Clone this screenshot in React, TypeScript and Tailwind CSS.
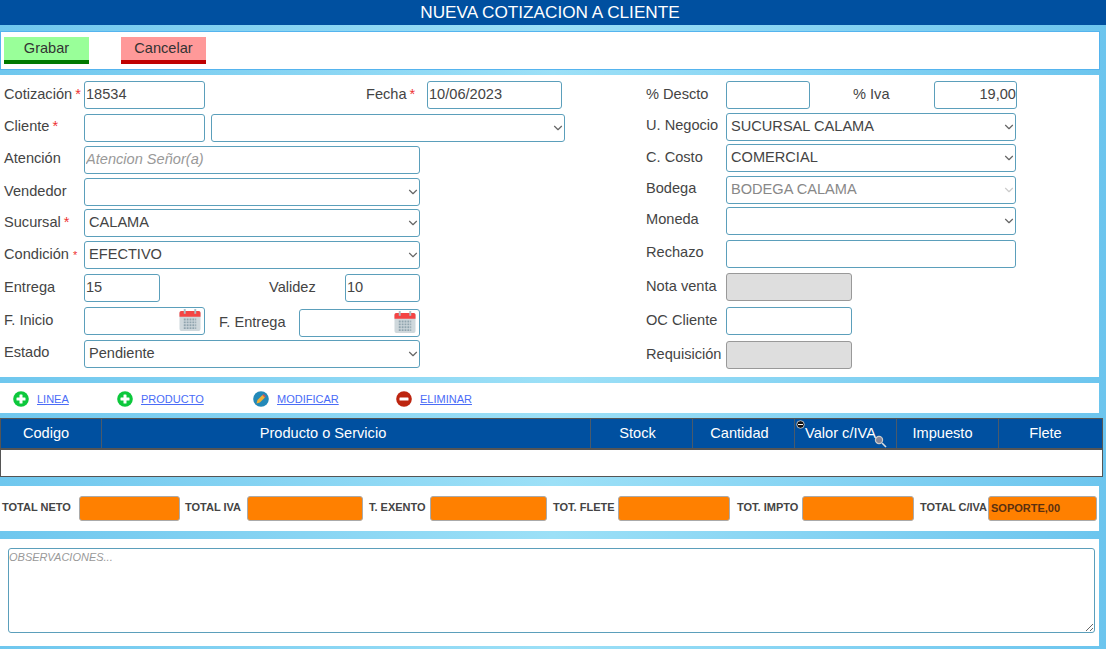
import { ChevronDown } from "lucide-react";

const inputCls =
  "h-full rounded-[3px] border border-[#5b9fbb] bg-white px-px pb-[2px] text-[14.6px] text-[#444] outline-none";
const selectCls =
  "h-full w-full appearance-none rounded-[3px] border border-[#5b9fbb] bg-white pl-[4px] text-[14.6px] text-[#444] outline-none";
const grayCls = "h-full rounded-[3px] border border-[#999] bg-[#dedede]";
const orangeCls =
  "h-[25px] w-full rounded-[3px] border border-[#aaa] bg-[#ff8000] px-[2px] pb-[2px] text-[11px] font-bold text-[#5a3010] outline-none";

function Star({ className = "" }: { className?: string }) {
  return <span className={`text-[#e33] ${className}`}>*</span>;
}

function Label({ text, star, up }: { text: string; star?: boolean; up?: boolean }) {
  return (
    <span className={`w-[80px] shrink-0 whitespace-nowrap text-[14.6px] text-[#444] ${up ? "-translate-y-[1px]" : ""}`}>
      {text}
      {star && <Star className="ml-[3px]" />}
    </span>
  );
}

function Calendar() {
  return (
    <svg className="absolute right-[4px] top-[2px]" width="22" height="22" viewBox="0 0 23 23">
      <rect x="0.5" y="2" width="22" height="21" rx="2" fill="#cfd8dc" />
      <path d="M0.5 8V4a2 2 0 0 1 2-2h18a2 2 0 0 1 2 2v4z" fill="#f44444" />
      <rect x="5" y="0" width="2" height="5" fill="#b0bec5" />
      <rect x="16" y="0" width="2" height="5" fill="#b0bec5" />
      <path
        d="M5 11h13M5 14h13M5 17h13M5 20h13"
        stroke="#90a4ae"
        strokeWidth="2"
        strokeDasharray="2 1"
      />
    </svg>
  );
}

function Select({ value, width, disabled }: { value: string; width: string; disabled?: boolean }) {
  return (
    <div className={`relative h-full ${width}`}>
      <select
        disabled={disabled}
        defaultValue={value}
        className={`${selectCls} ${disabled ? "bg-[#e6e6e6] text-[#888]" : ""}`}
      >
        <option value={value}>{value}</option>
      </select>
      <ChevronDown
        size={14}
        strokeWidth={2}
        className={`pointer-events-none absolute right-0 top-[7px] ${
          disabled ? "text-[#ccc]" : "text-[#666]"
        }`}
      />
    </div>
  );
}

function CircleIcon({ color, minus }: { color: string; minus?: boolean }) {
  return (
    <svg width="16" height="16" viewBox="0 0 16 16" className="shrink-0">
      <circle cx="8" cy="8" r="7.8" fill={color} />
      <rect x="3.5" y="6.5" width="9" height="3" rx="0.6" fill="#fff" />
      {!minus && <rect x="6.5" y="3.5" width="3" height="9" rx="0.6" fill="#fff" />}
    </svg>
  );
}

function PencilIcon() {
  return (
    <svg width="16" height="16" viewBox="0 0 16 16" className="shrink-0">
      <circle cx="8" cy="8" r="7.8" fill="#2389b8" />
      <path d="M3.5 12.5l1-3.4 5-5 2.4 2.4-5 5z" fill="#f2b134" />
      <path d="M9.5 4.1l1-1 2.4 2.4-1 1z" fill="#d9534f" />
    </svg>
  );
}

function ActionLink({ icon, text }: { icon: React.ReactNode; text: string }) {
  return (
    <div className="flex items-center gap-[8px]">
      {icon}
      <a href="#" className="text-[11px] text-[#4a6cf7] underline">
        {text}
      </a>
    </div>
  );
}

const columns = [
  { name: "Codigo", pad: "pr-[10px]" },
  { name: "Producto o Servicio", pad: "pr-[46px]" },
  { name: "Stock", pad: "pr-[8px]" },
  { name: "Cantidad", pad: "pr-[8px]" },
  { name: "Valor c/IVA", pad: "pr-[10px]" },
  { name: "Impuesto", pad: "pr-[10px]" },
  { name: "Flete", pad: "pr-[10px]" },
];

const totals = [
  { label: "TOTAL NETO", value: "", pad: "" },
  { label: "TOTAL IVA", value: "", pad: "pl-[5px]" },
  { label: "T. EXENTO", value: "", pad: "pl-[6px]" },
  { label: "TOT. FLETE", value: "", pad: "pl-[6px]" },
  { label: "TOT. IMPTO", value: "", pad: "pl-[7px]" },
  { label: "TOTAL C/IVA", value: "SOPORTE,00", pad: "pl-[6px]" },
];

export default function App() {
  return (
    <div
      className="h-[649px] w-[1106px] overflow-hidden bg-gradient-to-r from-[#6fc7ee] via-[#9ce0f7] to-[#6cc5ee] text-[#444]"
      style={{ fontFamily: '"Liberation Sans", Arial, sans-serif' }}
    >
      <div className="flex h-[25px] items-center justify-center bg-[#0050a0] pr-[6px] text-[17.2px] text-white">
        NUEVA COTIZACION A CLIENTE
      </div>

      <div className="mt-[6px] flex h-[39px] w-[1100px] items-start gap-[32px] border border-[#55b4ee] bg-white pl-[3px] pt-[5px]">
        <button className="h-[27px] w-[85px] border-b-[4px] border-[#007a00] bg-[#99ff99] text-[14.6px] text-[#333]">
          Grabar
        </button>
        <button className="h-[27px] w-[85px] border-b-[4px] border-[#c00000] bg-[#ff9999] text-[14.6px] text-[#333]">
          Cancelar
        </button>
      </div>

      <div className="mt-[5px] flex h-[302px] w-[1099px] bg-white pt-[6px]">
        <div className="w-[646px] shrink-0 pl-[4px]">
          <div className="flex h-[28px] items-center">
            <Label text="Cotización" star />
            <input className={`${inputCls} w-[121px]`} defaultValue="18534" />
            <span className="ml-[161px] w-[61px] text-[14.6px]">
              Fecha
              <Star className="ml-[3px]" />
            </span>
            <input className={`${inputCls} w-[135px]`} defaultValue="10/06/2023" />
          </div>
          <div className="mt-[5px] flex h-[28px] items-center">
            <Label text="Cliente" star up />
            <input className={`${inputCls} w-[121px]`} />
            <div className="ml-[6px] h-full">
              <Select value="" width="w-[354px]" />
            </div>
          </div>
          <div className="mt-[4px] flex h-[28px] items-center">
            <Label text="Atención" up />
            <input
              className={`${inputCls} w-[336px] placeholder:italic placeholder:text-[#999]`}
              placeholder="Atencion Señor(a)"
            />
          </div>
          <div className="mt-[4px] flex h-[28px] items-center">
            <Label text="Vendedor" />
            <Select value="" width="w-[336px]" />
          </div>
          <div className="mt-[3px] flex h-[28px] items-center">
            <Label text="Sucursal" star />
            <Select value="CALAMA" width="w-[336px]" />
          </div>
          <div className="mt-[4px] flex h-[28px] items-center">
            <span className="w-[80px] shrink-0 whitespace-nowrap text-[14.6px]">
              Condición
              <Star className="ml-[4px] text-[11px]" />
            </span>
            <Select value="EFECTIVO" width="w-[336px]" />
          </div>
          <div className="mt-[5px] flex h-[28px] items-center">
            <Label text="Entrega" />
            <input className={`${inputCls} w-[76px]`} defaultValue="15" />
            <span className="ml-[109px] w-[76px] text-[14.6px]">Validez</span>
            <input className={`${inputCls} w-[75px]`} defaultValue="10" />
          </div>
          <div className="mt-[5px] flex h-[28px] items-center">
            <Label text="F. Inicio" />
            <div className="relative h-full w-[121px]">
              <input className={`${inputCls} w-full`} />
              <Calendar />
            </div>
            <span className="ml-[14px] w-[80px] translate-y-[2px] text-[14.6px]">F. Entrega</span>
            <div className="relative h-full w-[121px] translate-y-[2px]">
              <input className={`${inputCls} w-full`} />
              <Calendar />
            </div>
          </div>
          <div className="mt-[5px] flex h-[28px] items-center">
            <Label text="Estado" up />
            <Select value="Pendiente" width="w-[336px]" />
          </div>
        </div>

        <div className="flex-1">
          <div className="flex h-[28px] items-center">
            <Label text="% Descto" />
            <input className={`${inputCls} w-[84px]`} />
            <span className="ml-[43px] w-[81px] text-[14.6px]">% Iva</span>
            <input className={`${inputCls} w-[83px] pr-0 text-right`} defaultValue="19,00" />
          </div>
          <div className="mt-[4px] flex h-[28px] items-center">
            <Label text="U. Negocio" up />
            <Select value="SUCURSAL CALAMA" width="w-[290px]" />
          </div>
          <div className="mt-[3px] flex h-[28px] items-center">
            <Label text="C. Costo" />
            <Select value="COMERCIAL" width="w-[290px]" />
          </div>
          <div className="mt-[4px] flex h-[28px] items-center">
            <Label text="Bodega" up />
            <Select value="BODEGA CALAMA" width="w-[290px]" disabled />
          </div>
          <div className="mt-[3px] flex h-[28px] items-center">
            <Label text="Moneda" up />
            <Select value="" width="w-[290px]" />
          </div>
          <div className="mt-[5px] flex h-[28px] items-center">
            <Label text="Rechazo" up />
            <input className={`${inputCls} w-[290px]`} />
          </div>
          <div className="mt-[5px] flex h-[28px] items-center">
            <Label text="Nota venta" />
            <div className={`${grayCls} w-[126px]`} />
          </div>
          <div className="mt-[6px] flex h-[28px] items-center">
            <Label text="OC Cliente" />
            <input className={`${inputCls} w-[126px]`} />
          </div>
          <div className="mt-[6px] flex h-[28px] items-center">
            <Label text="Requisición" />
            <div className={`${grayCls} w-[126px]`} />
          </div>
        </div>
      </div>

      <div className="mt-[6px] grid h-[30px] w-[1099px] grid-cols-[104px_136px_143px_1fr] items-center bg-white pl-[13px] pt-[2px]">
        <ActionLink icon={<CircleIcon color="#0cc83c" />} text="LINEA" />
        <ActionLink icon={<CircleIcon color="#0cc83c" />} text="PRODUCTO" />
        <ActionLink icon={<PencilIcon />} text="MODIFICAR" />
        <ActionLink icon={<CircleIcon color="#bd2510" minus />} text="ELIMINAR" />
      </div>

      <div className="mt-[5px] h-[59px] w-[1103px] border border-[#555] bg-white">
        <div className="relative grid h-[31px] grid-cols-[101px_489px_102px_102px_102px_102px_1fr] border-b-2 border-[#555] bg-[#0050a0]">
          {columns.map((col, i) => (
            <div
              key={col.name}
              className={`flex items-center justify-center text-[14.6px] text-white ${col.pad} ${
                i < columns.length - 1 ? "border-r border-[#4a5a6a]" : ""
              }`}
            >
              {col.name}
            </div>
          ))}
          <svg className="absolute left-[795px] top-[1px]" width="9" height="9" viewBox="0 0 9 9">
            <circle cx="4.5" cy="4.5" r="3.8" fill="#111" stroke="#ddd" strokeWidth="0.8" />
            <path d="M2 4.5h5" stroke="#fff" strokeWidth="1" />
          </svg>
          <svg className="absolute left-[873px] top-[16px]" width="13" height="13" viewBox="0 0 13 13">
            <circle cx="5" cy="5" r="3.6" fill="#889" stroke="#ccc" strokeWidth="1.2" />
            <path d="M8 8l4 4" stroke="#ddd" strokeWidth="1.6" />
          </svg>
        </div>
      </div>

      <div className="mt-[9px] grid h-[45px] w-[1099px] grid-cols-[77px_101px_67px_116px_67px_117px_71px_112px_72px_112px_74px_109px] items-center bg-white pl-[2px]">
        {totals.map((t) => (
          <div key={t.label} className="contents">
            <span className={`-translate-y-[1px] whitespace-nowrap text-[11px] font-bold text-[#444] ${t.pad}`}>
              {t.label}
            </span>
            <input className={orangeCls} defaultValue={t.value} />
          </div>
        ))}
      </div>

      <div className="mt-[8px] h-[107px] w-[1099px] bg-white pl-[8px] pt-[9px]">
        <textarea
          className="h-[85px] w-[1087px] rounded-[3px] border border-[#5b9fbb] px-0 pt-0 text-[11px] outline-none placeholder:italic placeholder:text-[#999]"
          placeholder="OBSERVACIONES..."
        />
      </div>
    </div>
  );
}
